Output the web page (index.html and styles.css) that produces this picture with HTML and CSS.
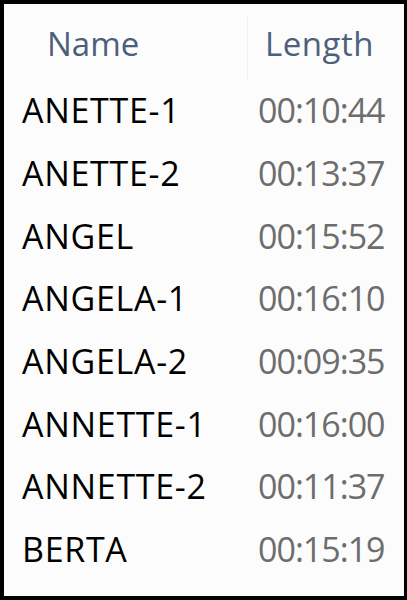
FILE: index.html
```html
<!DOCTYPE html>
<html lang="en">
<head>
    <meta charset="UTF-8">
    <meta name="viewport" content="width=device-width, initial-scale=1.0">
    <title>Recordings</title>
    <link rel="stylesheet" href="styles.css">
</head>
<body>
    <div class="file-list">
        <div class="list-header">
            <div class="col-name">Name</div>
            <div class="col-length">Length</div>
        </div>
        <div class="list-rows">
            <div class="row"><span class="name">ANETTE-1</span><span class="length">00:10:44</span></div>
            <div class="row"><span class="name">ANETTE-2</span><span class="length">00:13:37</span></div>
            <div class="row"><span class="name">ANGEL</span><span class="length">00:15:52</span></div>
            <div class="row"><span class="name">ANGELA-1</span><span class="length">00:16:10</span></div>
            <div class="row"><span class="name">ANGELA-2</span><span class="length">00:09:35</span></div>
            <div class="row"><span class="name">ANNETTE-1</span><span class="length">00:16:00</span></div>
            <div class="row"><span class="name">ANNETTE-2</span><span class="length">00:11:37</span></div>
            <div class="row"><span class="name">BERTA</span><span class="length">00:15:19</span></div>
        </div>
    </div>
</body>
</html>
```

FILE: styles.css
```css
body, html {
    margin: 0;
    padding: 0;
    height: 100%;
    background-color: #000;
    font-family: "Open Sans", "Noto Sans", sans-serif;
}
.file-list {
    box-sizing: border-box;
    width: 407px;
    height: 600px;
    border: 4px solid #000;
    border-right-width: 3px;
    background-color: #fcfcfc;
    display: flex;
    flex-direction: column;
}
.list-header {
    display: grid;
    grid-template-columns: 244px 1fr;
    height: 75px;
    padding-top: 10px;
    box-sizing: border-box;
    color: #4c607a;
    font-size: 33px;
}
.list-header .col-name {
    padding-left: 43px;
    border-right: 1px solid #f1f3f6;
    line-height: 60px;
    background-color: #fdfdfe;
}
.list-header .col-length {
    padding-left: 17px;
    line-height: 60px;
    letter-spacing: 0.5px;
}
.list-rows {
    display: flex;
    flex-direction: column;
}
.row {
    display: grid;
    grid-template-columns: 236px 1fr;
    height: 62.7px;
    align-items: center;
    font-size: 34px;
}
.name {
    padding-left: 18px;
    color: #000;
    letter-spacing: 0.7px;
}
.length {
    color: #6d6d6d;
    padding-left: 18px;
    letter-spacing: -1px;
}
```
